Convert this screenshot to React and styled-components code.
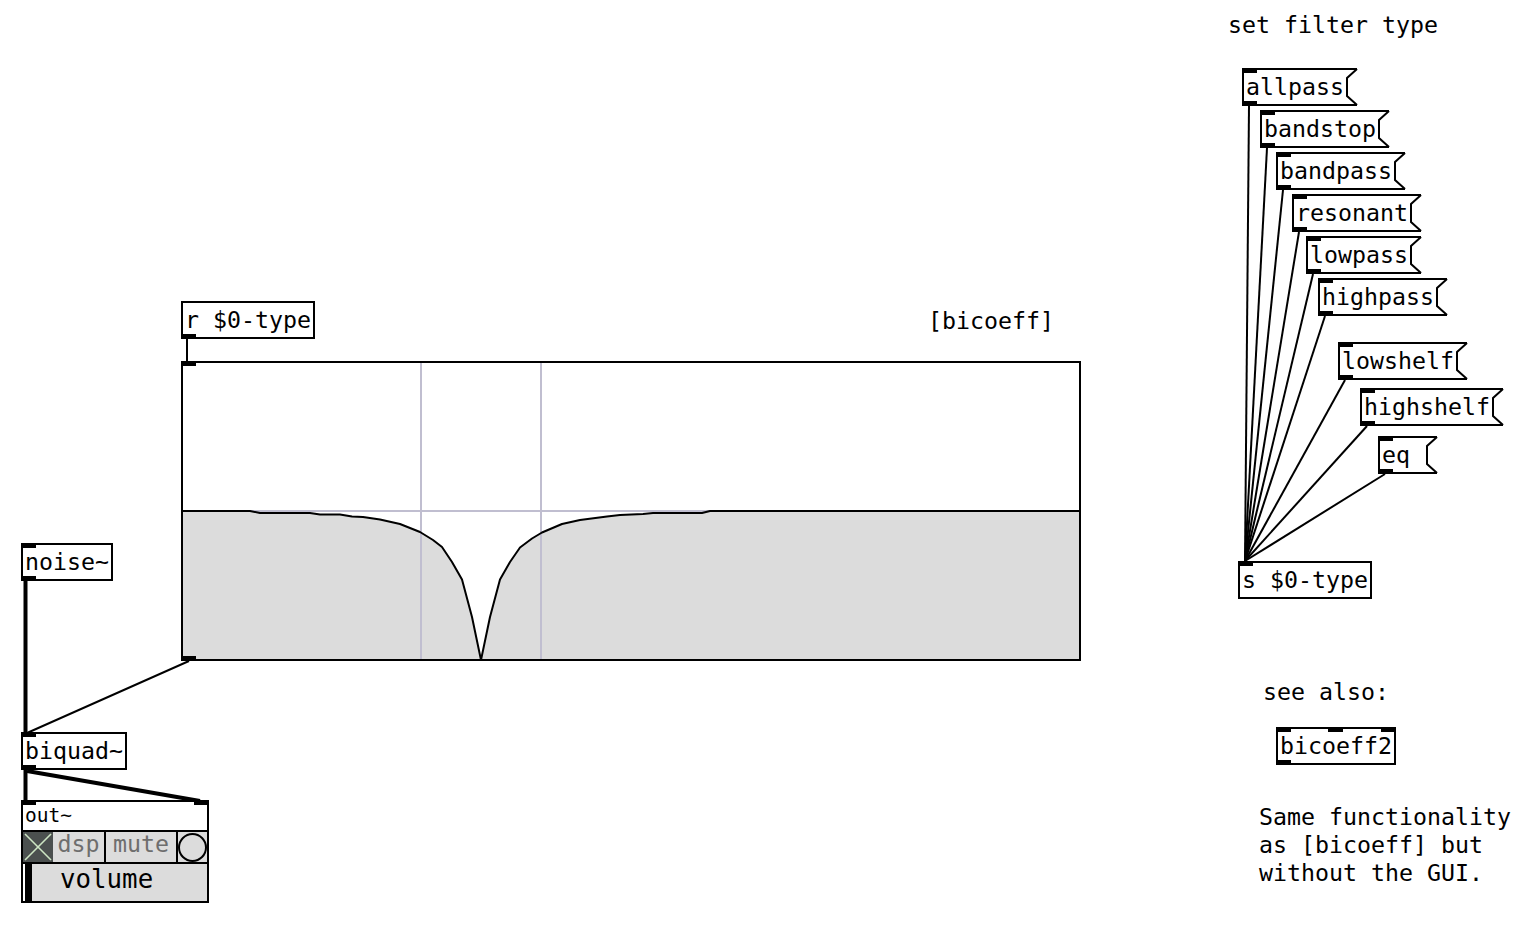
import React from 'react';
import styled, { createGlobalStyle } from 'styled-components';

const Global = createGlobalStyle`
  *, *::before, *::after { box-sizing: border-box; }
  html, body { margin: 0; padding: 0; background: #fff; }
  body { font-family: "DejaVu Sans Mono", "Liberation Mono", monospace; }
`;

const Canvas = styled.div`
  position: relative;
  width: 1540px;
  height: 940px;
  overflow: hidden;
  background: #fff;
  color: #000;
  font-family: "DejaVu Sans Mono", "Liberation Mono", monospace;
  font-size: 23.25px;
`;

const Node = styled.div`
  position: absolute;
  left: ${(p) => p.$x}px;
  top: ${(p) => p.$y}px;
`;

const ObjBox = styled(Node)`
  height: 38px;
  border: 2px solid #000;
  padding: 0 2px;
  line-height: 34px;
  white-space: pre;
  background: #fff;
`;

const MsgBox = styled(Node)`
  display: flex;
  height: 38px;
  border-top: 2px solid #000;
  border-bottom: 2px solid #000;
  border-left: 2px solid #000;
  background: #fff;
`;

const MsgText = styled.span`
  display: block;
  padding: 0 2px;
  min-width: calc(3ch + 4px);
  line-height: 34px;
  white-space: pre;
`;

const FlagSvg = styled.svg`
  display: block;
  width: 11px;
  height: 38px;
  margin: -2px 0;
  overflow: visible;
`;

const Port = styled.span`
  position: absolute;
  width: 15px;
  height: 5px;
  background: #000;
  ${(p) => (p.$bottom ? 'bottom: -2px;' : 'top: -2px;')}
  ${(p) =>
    p.$pos === 'right'
      ? 'right: -2px;'
      : p.$pos === 'mid'
      ? 'left: calc(50% - 7.5px);'
      : 'left: -2px;'}
`;

const Comment = styled(Node)`
  line-height: 28px;
  white-space: pre;
`;

const GraphBox = styled(Node)`
  width: 900px;
  height: 300px;
  border: 2px solid #000;
  background: #fff;
`;

const GraphSvg = styled.svg`
  display: block;
  width: 896px;
  height: 296px;
`;

const Wires = styled.svg`
  position: absolute;
  left: 0;
  top: 0;
  width: 1540px;
  height: 940px;
  pointer-events: none;
`;

const OutBox = styled(Node)`
  width: 188px;
  height: 103px;
  border: 2px solid #000;
  display: flex;
  flex-direction: column;
  background: #fff;
`;

const OutLabel = styled.div`
  height: 28px;
  font-size: 19.5px;
  line-height: 28px;
  padding-left: 2px;
`;

const ControlRow = styled.div`
  display: flex;
  height: 32px;
  border-top: 2px solid #000;
`;

const ToggleCell = styled.div`
  width: 30px;
  background: #4b504f;
  display: flex;
  align-items: center;
  justify-content: center;
`;

const TextCell = styled.div`
  width: ${(p) => p.$w}px;
  background: #dcdcdc;
  color: #6e6e6e;
  text-align: center;
  line-height: 24px;
  ${(p) => (p.$sep ? 'border-left: 2px solid #000;' : '')}
`;

const BangCell = styled.div`
  width: 31px;
  background: #dcdcdc;
  border-left: 2px solid #000;
  display: flex;
  align-items: center;
  justify-content: center;
`;

const BangCircle = styled.div`
  width: 29px;
  height: 29px;
  border: 2px solid #000;
  border-radius: 50%;
`;

const SliderRow = styled.div`
  flex: 1;
  display: flex;
  border-top: 2px solid #000;
  background: #dcdcdc;
`;

const SliderGap = styled.span`
  width: 2px;
  background: #fff;
`;

const SliderKnob = styled.span`
  width: 7px;
  background: #000;
`;

const SliderLabel = styled.span`
  margin-left: 28px;
  font-size: 25.8px;
  line-height: 31px;
`;

const messages = [
  { t: 'allpass', x: 1242, y: 68 },
  { t: 'bandstop', x: 1260, y: 110 },
  { t: 'bandpass', x: 1276, y: 152 },
  { t: 'resonant', x: 1292, y: 194 },
  { t: 'lowpass', x: 1306, y: 236 },
  { t: 'highpass', x: 1318, y: 278 },
  { t: 'lowshelf', x: 1338, y: 342 },
  { t: 'highshelf', x: 1360, y: 388 },
  { t: 'eq', x: 1378, y: 436 },
];

const SEND = { x: 1238, y: 561 };
const GRAPH = { x: 181, y: 361 };

const leftCurve = [
  [183, 511], [250, 511], [260, 513], [310, 513], [320, 514.5], [340, 514.5],
  [352, 516.5], [363, 517], [380, 519.5], [400, 524], [420, 532], [433, 540],
  [442, 547], [452, 562], [462, 579.5], [472, 617], [481, 660],
];
const rightCurve = [
  [490, 617], [500, 579.5], [510, 562], [520, 547.5], [532, 538.5], [542, 532.5],
  [562, 524], [580, 520], [607, 516.5], [620, 515], [643, 514], [653, 513],
  [702, 513], [710, 511], [1079, 511],
];
const curve = [...leftCurve, ...rightCurve];
const curveStr = curve.map(([x, y]) => `${x},${y}`).join(' ');
const fillStr = `${curveStr} 1079,659 183,659`;

const controlWires = [
  [187, 339, 187, 361],
  [189, 661, 27, 733],
  ...messages.map((m) => [m.x + 7, m.y + 38, SEND.x + 7, SEND.y]),
];

const signalWires = [
  [25.5, 581, 25.5, 732],
  [25.5, 770, 25.5, 800],
  [27, 771, 200, 801],
];

function Msg({ t, x, y }) {
  return (
    <MsgBox $x={x} $y={y}>
      <Port />
      <MsgText>{t}</MsgText>
      <FlagSvg viewBox="0 0 11 38">
        <polyline points="11,1 1,10 1,28 11,37" fill="none" stroke="#000" strokeWidth="2" />
      </FlagSvg>
      <Port $bottom />
    </MsgBox>
  );
}

export default function App() {
  return (
    <Canvas>
      <Global />

      <Comment $x={1228} $y={11}>set filter type</Comment>
      <Comment $x={928} $y={307}>[bicoeff]</Comment>
      <Comment $x={1263} $y={678}>see also:</Comment>
      <Comment $x={1259} $y={803}>{'Same functionality\nas [bicoeff] but\nwithout the GUI.'}</Comment>

      {messages.map((m) => (
        <Msg key={m.t} {...m} />
      ))}

      <ObjBox $x={SEND.x} $y={SEND.y}>
        <Port />
        s $0-type
      </ObjBox>

      <ObjBox $x={1276} $y={727}>
        <Port />
        <Port $pos="mid" />
        <Port $pos="right" />
        bicoeff2
        <Port $bottom />
      </ObjBox>

      <ObjBox $x={181} $y={301}>
        r $0-type
        <Port $bottom />
      </ObjBox>

      <GraphBox $x={GRAPH.x} $y={GRAPH.y}>
        <Port />
        <GraphSvg viewBox="183 363 896 296">
          <polygon points={fillStr} fill="#dcdcdc" />
          <line x1="421" y1="363" x2="421" y2="659" stroke="#c0bed0" strokeWidth="2" />
          <line x1="541" y1="363" x2="541" y2="659" stroke="#c0bed0" strokeWidth="2" />
          <line x1="183" y1="511" x2="1079" y2="511" stroke="#c0bed0" strokeWidth="2" />
          <polyline points={curveStr} fill="none" stroke="#000" strokeWidth="2" strokeLinejoin="round" />
        </GraphSvg>
        <Port $bottom />
      </GraphBox>

      <ObjBox $x={21} $y={543}>
        <Port />
        noise~
        <Port $bottom />
      </ObjBox>

      <ObjBox $x={21} $y={732}>
        <Port />
        biquad~
        <Port $bottom />
      </ObjBox>

      <OutBox $x={21} $y={800}>
        <Port />
        <Port $pos="right" />
        <OutLabel>out~</OutLabel>
        <ControlRow>
          <ToggleCell>
            <svg width="30" height="30" viewBox="0 0 30 30">
              <line x1="2" y1="2" x2="28" y2="28" stroke="#cde6c4" strokeWidth="1.6" />
              <line x1="28" y1="2" x2="2" y2="28" stroke="#cde6c4" strokeWidth="1.6" />
            </svg>
          </ToggleCell>
          <TextCell $w={51}>dsp</TextCell>
          <TextCell $w={72} $sep>mute</TextCell>
          <BangCell>
            <BangCircle />
          </BangCell>
        </ControlRow>
        <SliderRow>
          <SliderGap />
          <SliderKnob />
          <SliderLabel>volume</SliderLabel>
        </SliderRow>
      </OutBox>

      <Wires viewBox="0 0 1540 940">
        {controlWires.map(([x1, y1, x2, y2], i) => (
          <line key={`c${i}`} x1={x1} y1={y1} x2={x2} y2={y2} stroke="#000" strokeWidth="2" />
        ))}
        {signalWires.map(([x1, y1, x2, y2], i) => (
          <line key={`s${i}`} x1={x1} y1={y1} x2={x2} y2={y2} stroke="#000" strokeWidth="4" />
        ))}
      </Wires>
    </Canvas>
  );
}
